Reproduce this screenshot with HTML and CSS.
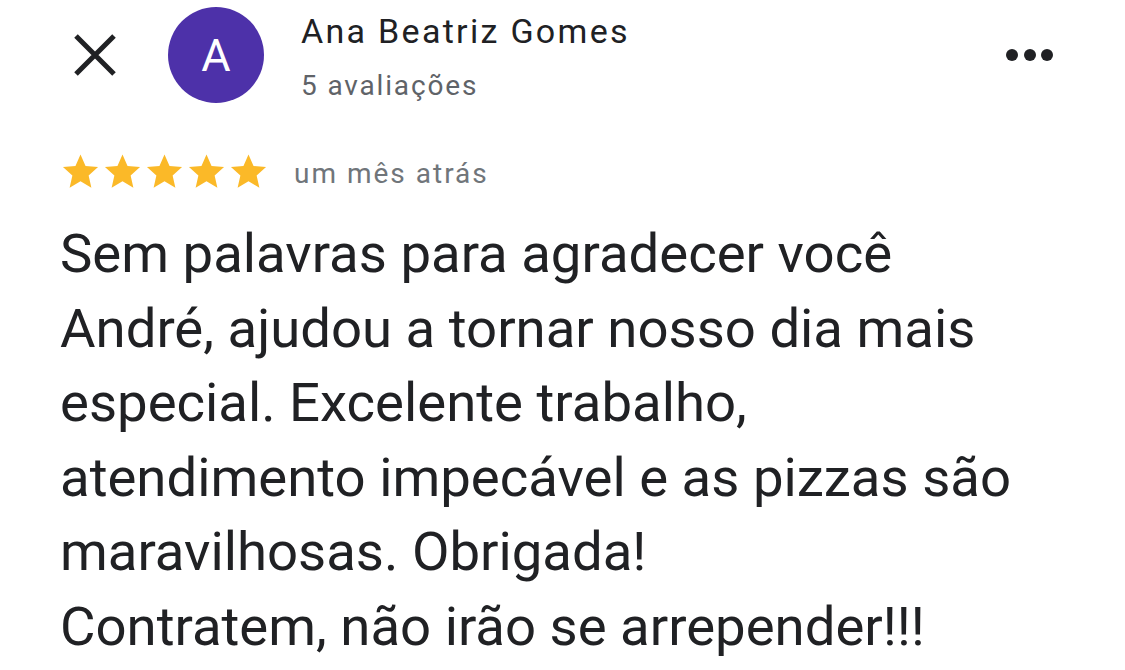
FILE: index.html
```html
<!DOCTYPE html>
<html lang="pt-BR">
<head>
    <meta charset="UTF-8">
    <meta name="viewport" content="width=device-width, initial-scale=1.0">
    <title>Avaliação</title>
    <link rel="stylesheet" href="styles.css">
</head>
<body>
    <div class="review">
        <header class="review-header">
            <button class="close-button" type="button" aria-label="Fechar">
                <svg width="44" height="44" viewBox="0 0 44 44">
                    <path d="M3 3 L41 41 M41 3 L3 41" stroke="#202124" stroke-width="5" fill="none"/>
                </svg>
            </button>
            <div class="avatar">A</div>
            <div class="author">
                <div class="author-name">Ana Beatriz Gomes</div>
                <div class="author-meta">5 avaliações</div>
            </div>
            <button class="more-button" type="button" aria-label="Mais opções">
                <span class="dot"></span><span class="dot"></span><span class="dot"></span>
            </button>
        </header>

        <div class="rating-row">
            <div class="stars">
                <svg class="star" viewBox="0 0 24 24"><path d="M12 1.5l3.1 7.1 7.7.7-5.8 5.1 1.7 7.6L12 18l-6.7 4 1.7-7.6-5.8-5.1 7.7-.7z"/></svg>
                <svg class="star" viewBox="0 0 24 24"><path d="M12 1.5l3.1 7.1 7.7.7-5.8 5.1 1.7 7.6L12 18l-6.7 4 1.7-7.6-5.8-5.1 7.7-.7z"/></svg>
                <svg class="star" viewBox="0 0 24 24"><path d="M12 1.5l3.1 7.1 7.7.7-5.8 5.1 1.7 7.6L12 18l-6.7 4 1.7-7.6-5.8-5.1 7.7-.7z"/></svg>
                <svg class="star" viewBox="0 0 24 24"><path d="M12 1.5l3.1 7.1 7.7.7-5.8 5.1 1.7 7.6L12 18l-6.7 4 1.7-7.6-5.8-5.1 7.7-.7z"/></svg>
                <svg class="star" viewBox="0 0 24 24"><path d="M12 1.5l3.1 7.1 7.7.7-5.8 5.1 1.7 7.6L12 18l-6.7 4 1.7-7.6-5.8-5.1 7.7-.7z"/></svg>
            </div>
            <span class="review-date">um mês atrás</span>
        </div>

        <p class="review-text">Sem palavras para agradecer você<br>André, ajudou a tornar nosso dia mais<br>especial. Excelente trabalho,<br>atendimento impecável e as pizzas são<br>maravilhosas. Obrigada!<br>Contratem, não irão se arrepender!!!</p>
    </div>
</body>
</html>
```

FILE: styles.css
```css
body { margin: 0; background: #ffffff; font-family: Roboto, "Noto Sans", sans-serif; color: #202124; }

.review { padding: 7px 0 0 60px; }

.review-header { display: flex; align-items: center; height: 96px; }
.close-button { background: none; border: 0; padding: 0; width: 44px; height: 44px; margin-left: 13px; cursor: pointer; }
.close-button svg { display: block; }
.avatar {
    width: 96px;
    height: 96px;
    margin-left: 51px;
    border-radius: 50%;
    background: #4d31a9;
    color: #ffffff;
    font-size: 45px;
    display: flex;
    align-items: center;
    justify-content: center;
}
.author { margin-left: 37px; align-self: flex-start; margin-top: 4px; }
.author-name { font-size: 34px; line-height: 40px; letter-spacing: 2.3px; }
.author-meta { font-size: 28px; line-height: 36px; color: #5f6368; margin-top: 17px; letter-spacing: 1.85px; }

.more-button { background: none; border: 0; padding: 0; display: flex; gap: 5.5px; margin-left: auto; margin-right: 72px; cursor: pointer; }
.dot { width: 12px; height: 12px; border-radius: 50%; background: #202124; }

.rating-row { display: flex; align-items: center; margin-top: 49px; margin-left: 1px; height: 39px; }
.stars { display: flex; gap: 3px; }
.star { width: 39px; height: 39px; fill: #fbb928; }
.review-date { font-size: 28px; line-height: 36px; padding-top: 4px; color: #70757a; margin-left: 26px; letter-spacing: 2px; }

.review-text { font-size: 54.5px; line-height: 74.6px; margin: 25px 0 0; }
```
